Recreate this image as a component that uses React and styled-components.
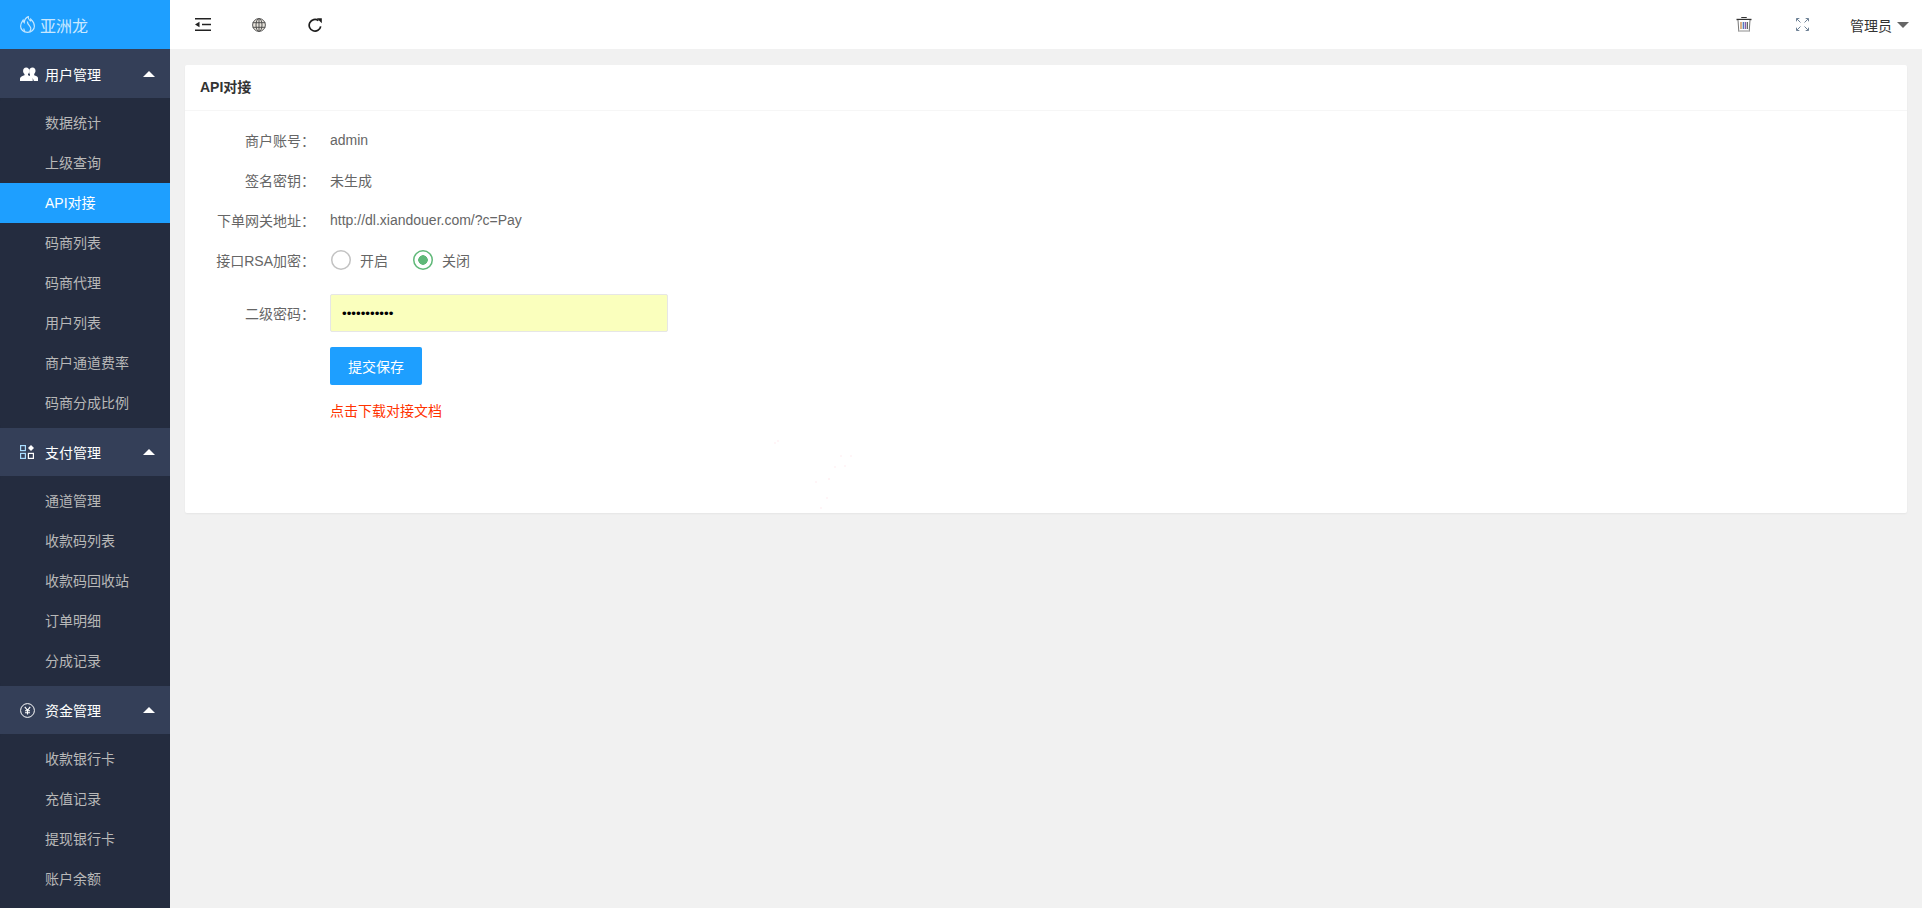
import React from 'react';
import styled, { createGlobalStyle } from 'styled-components';

const GlobalStyle = createGlobalStyle`
  html, body {
    margin: 0;
    height: 100%;
    overflow: hidden;
    background: #f1f1f1;
    font-family: "Liberation Sans", "Noto Sans CJK SC", sans-serif;
    font-size: 14px;
    color: #666;
  }
`;

const menus = [
  {
    title: '用户管理',
    icon: 'users',
    items: ['数据统计', '上级查询', 'API对接', '码商列表', '码商代理', '用户列表', '商户通道费率', '码商分成比例'],
  },
  {
    title: '支付管理',
    icon: 'apps',
    items: ['通道管理', '收款码列表', '收款码回收站', '订单明细', '分成记录'],
  },
  {
    title: '资金管理',
    icon: 'yen',
    items: ['收款银行卡', '充值记录', '提现银行卡', '账户余额'],
  },
];

const UsersIcon = () => (
  <svg width="18" height="14" viewBox="0 0 18 14" fill="#fff">
    <path d="M12.500 0.500c1.900 0 3 1.400 3 3.300 0 1.400-.6 2.500-1.300 3.100v1.300c1.500.7 3.800 1.300 3.800 2.900V14h-4.200c0-2.200-1.700-3.200-3.800-4.100V7.500c-.6-.8-.9-2-.9-3.700 0-1.900 1.500-3.300 3.400-3.300z" />
    <path d="M6.200 0.500c1.900 0 3.100 1.400 3.100 3.400 0 1.400-.5 2.500-1.300 3.100v1.300c2 .8 4.700 1.500 4.700 3.300V14H0v-2.400c0-1.800 2.600-2.500 4.500-3.300V7C3.700 6.400 3.100 5.300 3.100 3.900c0-2 1.200-3.400 3.100-3.400z" />
  </svg>
);

const AppsIcon = () => (
  <svg width="14" height="14" viewBox="0 0 14 14" fill="none" stroke="#fff" strokeWidth="1.200">
    <rect x="0.600" y="0.600" width="4.800" height="5" stroke="#a8dcff" />
    <rect x="0.600" y="8.400" width="4.800" height="5" stroke="#a8dcff" />
    <rect x="8.400" y="8.400" width="5" height="5" />
    <path d="M11 0l3 3-3 3-3-3z" fill="#fff" stroke="none" />
  </svg>
);

const YenIcon = () => (
  <svg width="15" height="15" viewBox="0 0 15 15" fill="none" stroke="#fff">
    <circle cx="7.500" cy="7.500" r="6.900" strokeWidth="1" />
    <path d="M4.800 3.800l2.700 3.600 2.700-3.600M7.500 7.400v4.200M5 7.800h5M5 9.700h5" strokeWidth="1.100" />
  </svg>
);

const menuIcons = { users: UsersIcon, apps: AppsIcon, yen: YenIcon };

const App = () => {
  return (
    <Layout>
      <GlobalStyle />
      <Sidebar>
        <Brand>
          <svg width="15" height="17" viewBox="0 0 15 17" fill="none" stroke="#c4e6ff" strokeWidth="1.200">
            <path d="M7.500 16.300C3.400 16.300.6 13.600.6 10.200c0-2.600 1.300-4.300 2.500-6 .2 1 .5 1.700 1.100 2.400C4.400 4 5.700 1.700 8.300.6c-.3 1.900.7 3.200 2 4.300.3-.6.5-1.100.5-1.700 2 1.800 3.600 4.200 3.600 7 0 3.400-2.800 6.100-6.900 6.100z" />
            <path d="M5 15.600c-1-1-1.300-2-1-3.100M7.400 5.500c-.2 2 1 3.200 2.300 4.600 1.200 1.400 1.400 3.800-.2 5.600" />
          </svg>
          <span>亚洲龙</span>
        </Brand>
        {menus.map((menu, index) => {
          const Icon = menuIcons[menu.icon];
          return (
            <section key={menu.title}>
              <GroupHeader $first={index === 0}>
                <GroupIcon><Icon /></GroupIcon>
                <span>{menu.title}</span>
                <Caret />
              </GroupHeader>
              <SubMenu>
                {menu.items.map((item) => (
                  <SubItem key={item} $active={item === 'API对接'}>{item}</SubItem>
                ))}
              </SubMenu>
            </section>
          );
        })}
      </Sidebar>
      <Main>
        <TopBar>
          <ToolGroup>
            <ToolButton>
              <svg width="16" height="13" viewBox="0 0 16 13" fill="none" stroke="#222" strokeWidth="1.400">
                <path d="M0 .7h16M7 6.500h9M0 12.300h16" />
                <path d="M0 6.500l4.500-2.800v5.600z" fill="#222" stroke="none" />
              </svg>
            </ToolButton>
            <ToolButton>
              <svg width="14" height="14" viewBox="0 0 14 14" fill="#e8e4dc" stroke="#444" strokeWidth="0.900">
                <circle cx="7" cy="7" r="6.400" />
                <ellipse cx="7" cy="7" rx="3" ry="6.400" />
                <path d="M.8 4.700h12.400M.8 9.300h12.400M7 .6v12.800" />
              </svg>
            </ToolButton>
            <ToolButton>
              <svg width="14" height="14" viewBox="0 0 14 14" fill="none" stroke="#1c1c1c" strokeWidth="1.700">
                <path d="M12.700 8.300A5.800 5.800 0 1 1 10.400 2.600" />
                <path d="M8.800 0.300h5v5z" fill="#1c1c1c" stroke="none" />
              </svg>
            </ToolButton>
          </ToolGroup>
          <ToolGroup>
            <ToolButton $wide>
              <svg width="16" height="15" viewBox="0 0 16 15" fill="none">
                <path d="M5.500 1V.5h5V1" stroke="#333" />
                <path d="M0.500 2.500h15" stroke="#333" strokeWidth="1.400" />
                <path d="M2 3l.8 11.500h10.400L14 3" fill="#fff" stroke="#777" />
                <path d="M3 13h10v2H3z" fill="#c6c6c6" />
                <path d="M5 5v7" stroke="#c8823a" strokeWidth="1.200" />
                <path d="M7.300 5v7" stroke="#3f6fb0" strokeWidth="1.200" />
                <path d="M9.300 5v7" stroke="#7a4ea5" strokeWidth="1.200" />
                <path d="M11.300 5v7" stroke="#555" strokeWidth="1.200" />
              </svg>
            </ToolButton>
            <ToolButton $wide>
              <svg width="13" height="13" viewBox="0 0 13 13" fill="none" stroke="#6f8296" strokeWidth="1">
                <path d="M4.500 4.500L.7.700M.5 3.300V.5h2.800M8.500 4.500L12.300.7M9.700.5h2.800v2.800M4.500 8.500L.7 12.300M.5 9.700v2.800h2.800M8.500 8.500l3.800 3.800M12.500 9.700v2.800H9.700" />
              </svg>
            </ToolButton>
            <UserMenu>
              <span>管理员</span>
              <DownCaret />
            </UserMenu>
          </ToolGroup>
        </TopBar>
        <Content>
          <Card>
            <CardTitle>API对接</CardTitle>
            <CardBody>
              <FormRow>
                <FormLabel>商户账号：</FormLabel>
                <FormValue>admin</FormValue>
              </FormRow>
              <FormRow>
                <FormLabel>签名密钥：</FormLabel>
                <FormValue>未生成</FormValue>
              </FormRow>
              <FormRow>
                <FormLabel>下单网关地址：</FormLabel>
                <FormValue>http://dl.xiandouer.com/?c=Pay</FormValue>
              </FormRow>
              <FormRow>
                <FormLabel>接口RSA加密：</FormLabel>
                <RadioGroup>
                  <RadioOption>
                    <RadioMark />
                    <span>开启</span>
                  </RadioOption>
                  <RadioOption>
                    <RadioMark $checked />
                    <span>关闭</span>
                  </RadioOption>
                </RadioGroup>
              </FormRow>
              <PasswordRow>
                <FormLabel>二级密码：</FormLabel>
                <PasswordInput type="password" defaultValue="12345678901" readOnly />
              </PasswordRow>
              <ActionRow>
                <SubmitButton type="button">提交保存</SubmitButton>
                <DownloadLink href="#doc">点击下载对接文档</DownloadLink>
              </ActionRow>
            </CardBody>
            <Sparkles width="300" height="100" viewBox="0 0 300 100" fill="#ffe4e9">
              <circle cx="155" cy="23" r="0.700" />
              <circle cx="158" cy="21" r="0.700" />
              <circle cx="221" cy="36" r="0.700" />
              <circle cx="231" cy="36" r="0.700" />
              <circle cx="225" cy="46" r="0.700" />
              <circle cx="215" cy="47" r="0.700" />
              <circle cx="209" cy="59" r="0.800" />
              <circle cx="196" cy="62" r="0.700" />
              <circle cx="207" cy="78" r="0.700" />
              <circle cx="201" cy="88" r="0.700" />
            </Sparkles>
          </Card>
        </Content>
      </Main>
    </Layout>
  );
};

const Layout = styled.div`
  display: flex;
  height: 908px;
  overflow: hidden;
`;

const Sidebar = styled.aside`
  width: 170px;
  flex: none;
  height: 908px;
  overflow: hidden;
  background: #242c3f;
`;

const Brand = styled.div`
  height: 49px;
  display: flex;
  align-items: center;
  gap: 5px;
  padding-left: 20px;
  background: #1e9fff;
  color: #c9e8ff;
  font-size: 16px;
`;

const GroupHeader = styled.div`
  height: ${(p) => (p.$first ? '49px' : '48px')};
  padding-top: ${(p) => (p.$first ? '1px' : '0')};
  box-sizing: border-box;
  display: flex;
  align-items: center;
  background: #343f58;
  color: #fff;
  font-size: 14px;
`;

const GroupIcon = styled.span`
  width: 45px;
  padding-left: 20px;
  box-sizing: border-box;
  display: flex;
  align-items: center;
`;

const Caret = styled.i`
  margin-left: auto;
  margin-right: 15px;
  width: 0;
  height: 0;
  border-left: 6px solid transparent;
  border-right: 6px solid transparent;
  border-bottom: 6px solid #fff;
`;

const SubMenu = styled.div`
  padding: 5px 0;
  border-radius: 3px;
  background: #242c3f;
`;

const SubItem = styled.div`
  height: 40px;
  line-height: 40px;
  padding-left: 45px;
  font-size: 14px;
  color: ${(p) => (p.$active ? '#fff' : '#b8b8b8')};
  background: ${(p) => (p.$active ? '#1e9fff' : 'transparent')};
`;

const Main = styled.main`
  flex: 1;
  min-width: 0;
  display: flex;
  flex-direction: column;
`;

const TopBar = styled.header`
  height: 49px;
  flex: none;
  display: flex;
  justify-content: space-between;
  align-items: center;
  background: #fff;
  padding: 0 13px 0 5px;
`;

const ToolGroup = styled.div`
  display: flex;
  align-items: center;
`;

const ToolButton = styled.span`
  width: ${(p) => (p.$wide ? '59px' : '56px')};
  height: 49px;
  display: flex;
  align-items: center;
  justify-content: center;
`;

const UserMenu = styled.span`
  display: flex;
  align-items: center;
  gap: 5px;
  margin-left: 18px;
  color: #333;
  font-size: 14px;
`;

const DownCaret = styled.i`
  width: 0;
  height: 0;
  border-left: 6px solid transparent;
  border-right: 6px solid transparent;
  border-top: 6px solid #666;
`;

const Content = styled.div`
  flex: 1;
  padding: 16px 15px;
`;

const Card = styled.div`
  position: relative;
  height: 448px;
  box-sizing: border-box;
  background: #fff;
  border-radius: 2px;
  box-shadow: 0 1px 2px 0 rgba(0, 0, 0, 0.05);
`;

const Sparkles = styled.svg`
  position: absolute;
  left: 435px;
  top: 355px;
  pointer-events: none;
`;

const CardTitle = styled.div`
  height: 46px;
  line-height: 45px;
  box-sizing: border-box;
  padding-left: 15px;
  border-bottom: 1px solid #f6f6f6;
  color: #333;
  font-size: 14px;
  font-weight: 700;
`;

const CardBody = styled.div`
  padding: 9px 0 0;
`;

const FormRow = styled.div`
  display: flex;
  align-items: center;
  height: 40px;
`;

const PasswordRow = styled(FormRow)`
  height: 38px;
  margin-top: 14px;
`;

const FormLabel = styled.label`
  width: 130px;
  flex: none;
  text-align: right;
  color: #666;
  margin-right: 15px;
`;

const FormValue = styled.div`
  color: #666;
`;

const RadioGroup = styled.div`
  display: flex;
  align-items: center;
  gap: 25px;
  margin-left: 1px;
`;

const RadioOption = styled.span`
  display: flex;
  align-items: center;
  gap: 9px;
  color: #666;
`;

const RadioMark = styled.i`
  width: 20px;
  height: 20px;
  box-sizing: border-box;
  border-radius: 50%;
  box-shadow: inset 0 0 0 1.500px ${(p) => (p.$checked ? '#5fb878' : '#c2c2c2')};
  background: ${(p) => (p.$checked ? 'radial-gradient(circle, #5fb878 0 4.500px, #fff 5px)' : '#fff')};
`;

const PasswordInput = styled.input`
  width: 338px;
  height: 38px;
  box-sizing: border-box;
  padding: 0 11px;
  border: 1px solid #e6e6e6;
  border-radius: 2px;
  background: #faffbd;
  color: #000;
  font-size: 13.330px;
  outline: none;
`;

const ActionRow = styled.div`
  padding: 15px 0 0 145px;
  display: flex;
  flex-direction: column;
  align-items: flex-start;
`;

const SubmitButton = styled.button`
  width: 92px;
  height: 38px;
  border: 0;
  border-radius: 2px;
  background: #1e9fff;
  color: #fff;
  font-family: inherit;
  font-size: 14px;
`;

const DownloadLink = styled.a`
  margin-top: 16px;
  color: #ff3300;
  font-size: 14px;
  line-height: 20px;
  text-decoration: none;
`;

export default App;
